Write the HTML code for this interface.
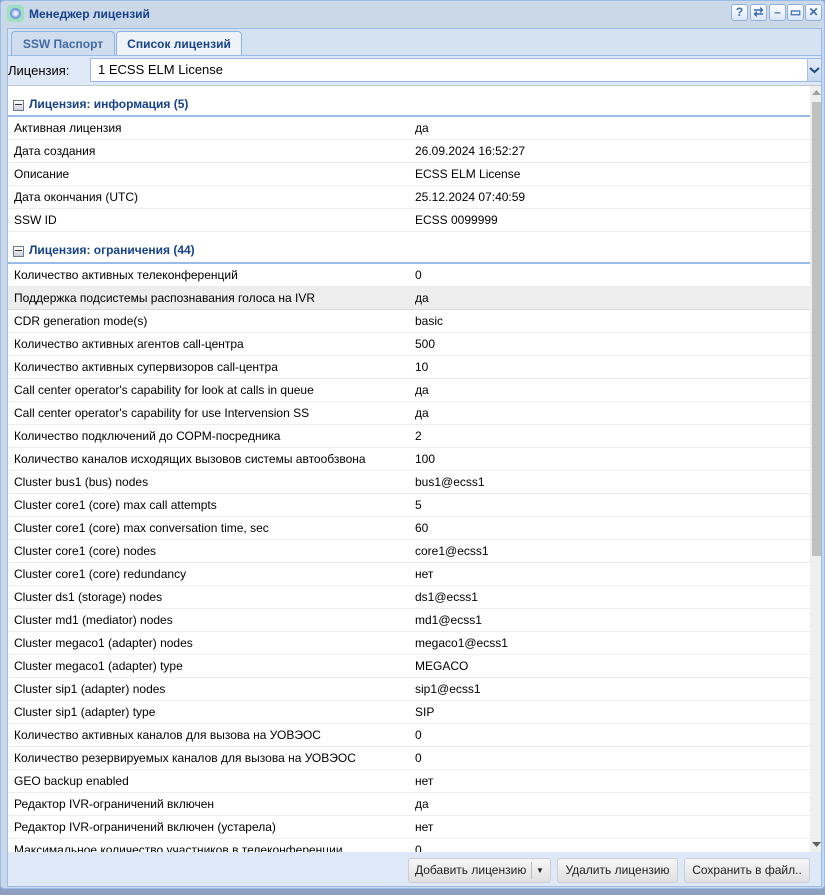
<!DOCTYPE html>
<html><head><meta charset="utf-8"><style>
*{box-sizing:border-box;margin:0;padding:0}
body{width:825px;height:895px;background:#8e9fbf;font-family:"Liberation Sans",Arial,sans-serif;font-size:12px;color:#000;position:relative;overflow:hidden}
.win{position:absolute;left:0;top:0;width:825px;height:889px;background:#cbd8e8;border:1px solid #99bbe8;border-radius:4px}
.title{position:absolute;left:6px;top:3px;height:20px;font-weight:bold;color:#15428b;font-size:12px;line-height:20px;padding-left:22px}
.ico{position:absolute;left:6px;top:4px;width:17px;height:17px;border-radius:4px;background:#9fe0c0}
.ico:after{content:"";position:absolute;left:3px;top:3px;width:11px;height:11px;border-radius:50%;background:radial-gradient(#e8f0ff 20%,#6a8fe0 60%,#aac0f0)}
.tb{position:absolute;top:3px;width:17px;height:17px;border:1px solid #8fb0da;border-radius:3px;background:linear-gradient(#fff,#dbe7f7);color:#3c6cb0;font-weight:bold;font-size:12px;text-align:center;line-height:15px}
.tabs{position:absolute;left:6px;top:27px;width:815px;height:28px;background:#d5e2f2;border:1px solid #99bbe8;border-bottom:none}
.tab{position:absolute;top:2px;height:26px;border:1px solid #8db2e3;border-bottom:none;border-radius:4px 4px 0 0;font-weight:bold;font-size:12px;line-height:24px;text-align:center}
.body{position:absolute;left:6px;top:54px;width:815px;height:832px;background:#dfe8f6;border:1px solid #99bbe8}
.combo{position:absolute;left:82px;top:2px;width:718px;height:24px;background:#fff;border:1px solid #99bbe8;font-size:13px;line-height:22px;padding-left:7px}
.trig{position:absolute;left:799px;top:2px;width:15px;height:24px;background:linear-gradient(#e3ecf7,#c8d9ee);border:1px solid #99bbe8;border-left:1px solid #a9c0de}
.grid{position:absolute;left:0;top:29px;width:813px;height:767px;background:#fff;border-top:1px solid #c0c8d0;overflow:hidden}
.sb{position:absolute;left:802px;top:0;width:12px;height:767px;background:#efefef}
.thumb{position:absolute;left:804px;top:16px;width:9px;height:454px;background:#c1c1c1}
.gh{position:absolute;left:0;width:802px;border-bottom:2px solid #99bbe8;color:#15428b;font-weight:bold;padding-left:21px}
.gh:before{content:"";position:absolute;left:5px;top:50%;margin-top:-6px;width:9px;height:9px;border:1px solid #6d7c8c;background:linear-gradient(#fff,#ccd);}
.gh:after{content:"";position:absolute;left:7px;top:50%;margin-top:-2px;width:7px;height:1px;background:#333}
.r{position:absolute;left:0;width:802px;height:23px;border-bottom:1px solid #ededed;line-height:22px}
.r span{position:absolute;left:6px}
.r b{font-weight:normal;position:absolute;left:407px}
.r.h{background:#ededed;border-bottom:1px solid #d9d9d9}
.btn{position:absolute;top:802px;height:25px;border:1px solid #c8cfd8;border-radius:3px;background:linear-gradient(#f6f6f6,#e0e0e0);font-size:12px;line-height:23px;text-align:center;color:#222}
</style></head><body>
<div class="win">
<div class="ico"></div><div class="title">Менеджер лицензий</div>
<div class="tb" style="left:730px">?</div>
<div class="tb" style="left:749px">⇄</div>
<div class="tb" style="left:768px">–</div>
<div class="tb" style="left:786px">▭</div>
<div class="tb" style="left:804px">✕</div>
<div class="tabs">
<div class="tab" style="left:3px;width:104px;background:#d0ddee;color:#416aa3">SSW Паспорт</div>
<div class="tab" style="left:108px;width:126px;background:#eef3fa;color:#15428b;height:27px">Список лицензий</div>
</div>
<div class="body">
<div style="position:absolute;left:0;top:7px;font-size:13px">Лицензия:</div>
<div class="combo">1 ECSS ELM License</div>
<div class="trig"><svg width="13" height="22"><path d="M2 9l4.5 4 4.5-4" stroke="#234a80" stroke-width="2" fill="none"/></svg></div>
<div class="grid">
<div class="gh" style="top:10px;height:21px;line-height:17px">Лицензия: информация (5)</div>
<div class="r" style="top:31px"><span>Активная лицензия</span><b>да</b></div>
<div class="r" style="top:54px"><span>Дата создания</span><b>26.09.2024 16:52:27</b></div>
<div class="r" style="top:77px"><span>Описание</span><b>ECSS ELM License</b></div>
<div class="r" style="top:100px"><span>Дата окончания (UTC)</span><b>25.12.2024 07:40:59</b></div>
<div class="r" style="top:123px"><span>SSW ID</span><b>ECSS 0099999</b></div>
<div class="gh" style="top:156px;height:22px;line-height:17px">Лицензия: ограничения (44)</div>
<div class="r" style="top:178px"><span>Количество активных телеконференций</span><b>0</b></div>
<div class="r h" style="top:201px"><span>Поддержка подсистемы распознавания голоса на IVR</span><b>да</b></div>
<div class="r" style="top:224px"><span>CDR generation mode(s)</span><b>basic</b></div>
<div class="r" style="top:247px"><span>Количество активных агентов call-центра</span><b>500</b></div>
<div class="r" style="top:270px"><span>Количество активных супервизоров call-центра</span><b>10</b></div>
<div class="r" style="top:293px"><span>Call center operator's capability for look at calls in queue</span><b>да</b></div>
<div class="r" style="top:316px"><span>Call center operator's capability for use Intervension SS</span><b>да</b></div>
<div class="r" style="top:339px"><span>Количество подключений до СОРМ-посредника</span><b>2</b></div>
<div class="r" style="top:362px"><span>Количество каналов исходящих вызовов системы автообзвона</span><b>100</b></div>
<div class="r" style="top:385px"><span>Cluster bus1 (bus) nodes</span><b>bus1@ecss1</b></div>
<div class="r" style="top:408px"><span>Cluster core1 (core) max call attempts</span><b>5</b></div>
<div class="r" style="top:431px"><span>Cluster core1 (core) max conversation time, sec</span><b>60</b></div>
<div class="r" style="top:454px"><span>Cluster core1 (core) nodes</span><b>core1@ecss1</b></div>
<div class="r" style="top:477px"><span>Cluster core1 (core) redundancy</span><b>нет</b></div>
<div class="r" style="top:500px"><span>Cluster ds1 (storage) nodes</span><b>ds1@ecss1</b></div>
<div class="r" style="top:523px"><span>Cluster md1 (mediator) nodes</span><b>md1@ecss1</b></div>
<div class="r" style="top:546px"><span>Cluster megaco1 (adapter) nodes</span><b>megaco1@ecss1</b></div>
<div class="r" style="top:569px"><span>Cluster megaco1 (adapter) type</span><b>MEGACO</b></div>
<div class="r" style="top:592px"><span>Cluster sip1 (adapter) nodes</span><b>sip1@ecss1</b></div>
<div class="r" style="top:615px"><span>Cluster sip1 (adapter) type</span><b>SIP</b></div>
<div class="r" style="top:638px"><span>Количество активных каналов для вызова на УОВЭОС</span><b>0</b></div>
<div class="r" style="top:661px"><span>Количество резервируемых каналов для вызова на УОВЭОС</span><b>0</b></div>
<div class="r" style="top:684px"><span>GEO backup enabled</span><b>нет</b></div>
<div class="r" style="top:707px"><span>Редактор IVR-ограничений включен</span><b>да</b></div>
<div class="r" style="top:730px"><span>Редактор IVR-ограничений включен (устарела)</span><b>нет</b></div>
<div class="r" style="top:753px"><span>Максимальное количество участников в телеконференции</span><b>0</b></div>
<div class="sb"></div><div class="thumb"></div>
<svg style="position:absolute;left:804px;top:4px" width="9" height="6"><path d="M0 5h9L4.5 0z" fill="#a0a0a0"/></svg>
<svg style="position:absolute;left:804px;top:756px" width="9" height="6"><path d="M0 0h9L4.5 5z" fill="#606060"/></svg>
</div>
<div class="btn" style="left:400px;width:143px;text-align:left;padding-left:6px">Добавить лицензию<span style="position:absolute;left:122px;top:3px;height:17px;border-left:1px solid #bbb"></span><span style="position:absolute;left:127px;top:0;font-size:8px">▼</span></div>
<div class="btn" style="left:549px;width:121px">Удалить лицензию</div>
<div class="btn" style="left:676px;width:126px">Сохранить в файл..</div>
</div>
</div>
</body></html>
